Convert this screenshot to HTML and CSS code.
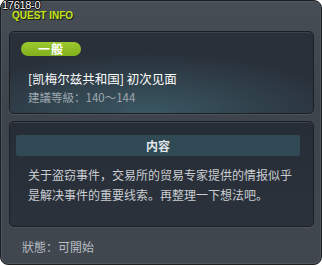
FILE: index.html
```html
<!DOCTYPE html>
<html lang="zh">
<head>
    <meta charset="UTF-8">
    <title>Quest Info</title>
    <link rel="stylesheet" href="styles.css">
</head>
<body>
    <div class="window">
        <span class="quest-id">17618-0</span>
        <div class="window-title">QUEST INFO</div>

        <div class="panel summary">
            <span class="badge">一般</span>
            <div class="quest-name">[凯梅尔兹共和国] 初次见面</div>
            <div class="quest-level">建議等級：140～144</div>
        </div>

        <div class="panel details">
            <div class="section-head">内容</div>
            <p class="description">关于盗窃事件，交易所的贸易专家提供的情报似乎是解决事件的重要线索。再整理一下想法吧。</p>
        </div>

        <div class="status">狀態：可開始</div>
    </div>
</body>
</html>
```

FILE: styles.css
```css
body {
    margin: 0;
    background: #ffffff;
    font-family: "Noto Sans CJK SC", "Liberation Sans", sans-serif;
}

.window {
    position: relative;
    box-sizing: border-box;
    width: 322px;
    height: 265px;
    padding: 0 7px 0 8px;
    border: 1px solid #1b1f23;
    border-radius: 8px;
    background: linear-gradient(#474d54, #3e444b 40%, #41474e);
    box-shadow: inset 0 0 0 1px #50565d;
}

.quest-id {
    position: absolute;
    left: 1px;
    top: 0;
    font-family: "Liberation Sans", sans-serif;
    font-size: 11px;
    letter-spacing: -0.3px;
    line-height: 9px;
    color: #ffffff;
    text-shadow: 1px 0 #000, -1px 0 #000, 0 1px #000, 0 -1px #000;
}

.window-title {
    padding: 10px 0 0 3px;
    height: 20px;
    font-family: "Liberation Sans", sans-serif;
    font-weight: bold;
    font-size: 10px;
    line-height: 10px;
    color: #c6e41c;
    text-shadow: 1px 1px #1a1e10;
}

.panel {
    box-sizing: border-box;
    width: 305px;
    border: 1px solid #1c2025;
    border-radius: 5px;
    box-shadow: inset 0 1px #3c424a, 0 1px #4d535a;
}

.summary {
    height: 83px;
    padding: 10px 11px 0;
    background:
        radial-gradient(ellipse 200px 60px at 45% 100%, #3a5863, rgba(40, 47, 56, 0)),
        #29303a;
}

.badge {
    display: block;
    width: 60px;
    height: 14px;
    border-radius: 7px;
    background: linear-gradient(#9cc92e, #82b01c);
    color: #ffffff;
    font-weight: bold;
    font-size: 12px;
    letter-spacing: 1px;
    line-height: 14px;
    text-align: center;
}

.quest-name {
    margin: 14px 0 0 7px;
    font-size: 12.5px;
    line-height: 17px;
    color: #ffffff;
}

.quest-level {
    margin: 3px 0 0 7px;
    font-size: 11.5px;
    line-height: 14px;
    color: #9ea6ae;
}

.details {
    height: 106px;
    margin-top: 7px;
    padding: 13px 13px 0 6px;
    background: linear-gradient(#272d36, #2c323b);
}

.section-head {
    height: 21px;
    border-radius: 2px;
    background: #2f4955;
    color: #e2e6ea;
    font-weight: bold;
    font-size: 12px;
    line-height: 21px;
    text-align: center;
}

.description {
    width: 266px;
    margin: 9px 0 0 12px;
    font-size: 12px;
    line-height: 20px;
    color: #c9ced3;
}

.status {
    margin: 12px 0 0 13px;
    font-size: 12px;
    line-height: 16px;
    color: #b6bdc3;
}
```
